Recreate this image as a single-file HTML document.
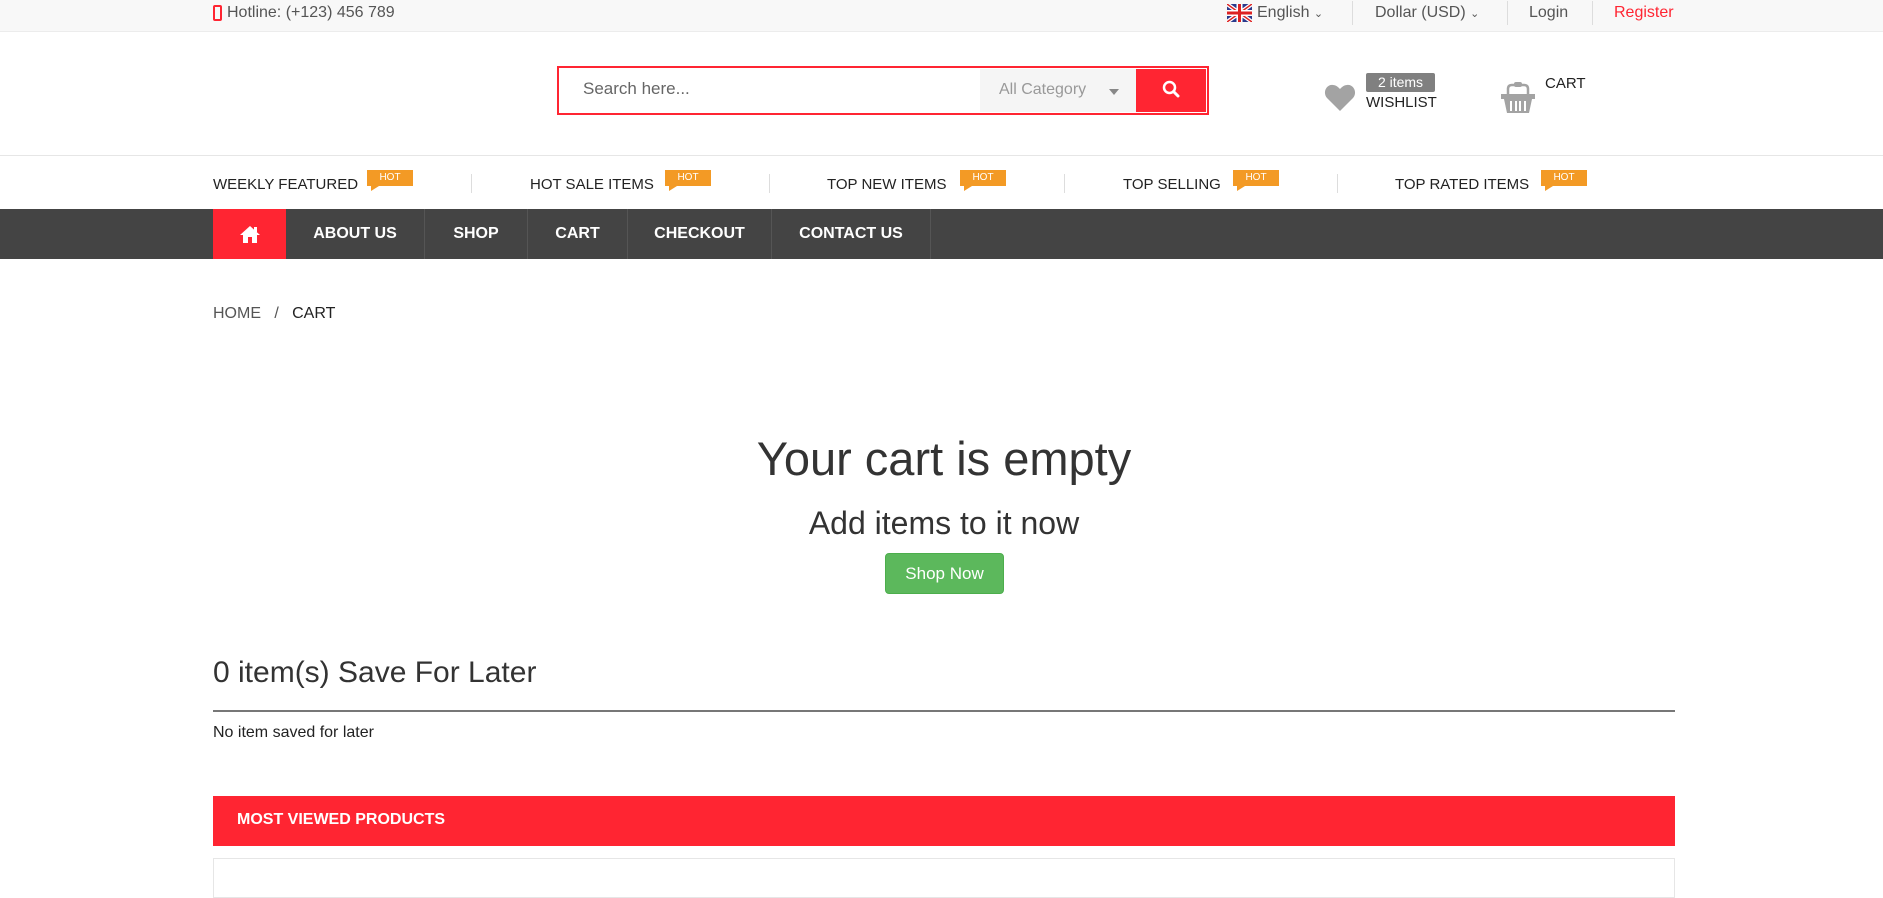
<!DOCTYPE html>
<html><head><meta charset="utf-8"><style>
*{margin:0;padding:0;box-sizing:border-box}
body{width:1883px;height:893px;overflow:hidden;background:#fff;font-family:"Liberation Sans",sans-serif;color:#333;position:relative}
.a{position:absolute;white-space:nowrap}
.top{position:absolute;left:0;top:0;width:1883px;height:32px;background:#f8f8f8;border-bottom:1px solid #ececec}
.t{font-size:16px;color:#555;top:4px}
.sep{position:absolute;width:1px;background:#ddd}
.tab{font-size:15px;color:#222;top:176px}
.hot{position:absolute;width:46px;height:16px;background:#f39a25;color:#fff;font-size:10px;text-align:center;line-height:16px;top:170px}
.hot:after{content:"";position:absolute;left:4px;top:16px;border-left:0 solid transparent;border-right:8px solid transparent;border-top:5px solid #f39a25}
.nav{position:absolute;left:0;top:209px;width:1883px;height:50px;background:#444}
.ni{position:absolute;top:0;height:50px;line-height:50px;color:#fff;font-weight:bold;font-size:16px;text-align:center;border-right:1px solid #555}
</style></head><body>
<div class="top"></div>
<svg class="a" style="left:213px;top:5px" width="9" height="16" viewBox="0 0 9 16"><rect x="1" y="1" width="7" height="14" rx="1" fill="none" stroke="#ff2532" stroke-width="2"/></svg>
<div class="a t" style="left:227px">Hotline: (+123) 456 789</div>
<svg class="a" style="left:1227px;top:4px" width="25" height="18" viewBox="0 0 25 18"><rect width="25" height="18" fill="#2b3a8c"/><path d="M0 0L25 18M25 0L0 18" stroke="#fff" stroke-width="4"/><path d="M0 0L25 18M25 0L0 18" stroke="#d22" stroke-width="1.5"/><path d="M12.5 0V18M0 9H25" stroke="#fff" stroke-width="6"/><path d="M12.5 0V18M0 9H25" stroke="#d22" stroke-width="3"/></svg>
<div class="a t" style="left:1257px">English <span style="font-size:11px">&#8964;</span></div>
<div class="sep" style="left:1352px;top:1px;height:24px"></div>
<div class="a t" style="left:1375px">Dollar (USD) <span style="font-size:11px">&#8964;</span></div>
<div class="sep" style="left:1507px;top:1px;height:24px"></div>
<div class="a t" style="left:1529px">Login</div>
<div class="sep" style="left:1592px;top:1px;height:24px"></div>
<div class="a t" style="left:1614px;color:#ff2532">Register</div>

<div class="a" style="left:557px;top:66px;width:652px;height:49px;border:2px solid #ff2532"></div>
<div class="a" style="left:583px;top:79px;font-size:17px;color:#666">Search here...</div>
<div class="a" style="left:980px;top:69px;width:156px;height:43px;background:#f5f5f5"></div>
<div class="a" style="left:999px;top:81px;font-size:16px;color:#999">All Category</div>
<div class="a" style="left:1109px;top:89px;border-left:5px solid transparent;border-right:5px solid transparent;border-top:6px solid #888"></div>
<div class="a" style="left:1136px;top:69px;width:70px;height:43px;background:#ff2532"></div>
<svg class="a" style="left:1162px;top:80px" width="18" height="18" viewBox="0 0 18 18"><circle cx="7.5" cy="7.5" r="5.5" fill="none" stroke="#fff" stroke-width="2.5"/><path d="M11.5 11.5L16 16" stroke="#fff" stroke-width="3" stroke-linecap="round"/></svg>

<svg class="a" style="left:1324px;top:84px" width="32" height="28" viewBox="0 0 32 28"><path d="M16 27L3 14C-2 8 3 0 9 1c3 0 5 2 7 4 2-2 4-4 7-4 6-1 11 7 6 13z" fill="#a3a3a3"/></svg>
<div class="a" style="left:1366px;top:73px;width:69px;height:19px;background:#808080;border-radius:2px;color:#fff;font-size:14px;text-align:center;line-height:19px">2 items</div>
<div class="a" style="left:1366px;top:94px;font-size:15px;color:#222">WISHLIST</div>
<svg class="a" style="left:1500px;top:80px" width="36" height="34" viewBox="0 0 36 34"><path d="M8 14V9Q8 5 12 5H24Q28 5 28 9V14" fill="none" stroke="#a3a3a3" stroke-width="2.5"/><rect x="14" y="2" width="8" height="5" rx="2" fill="#a3a3a3"/><rect x="1" y="14" width="34" height="5" fill="#a3a3a3"/><path d="M4 19H32L29 33H7Z" fill="#a3a3a3"/><path d="M11 21V31M16 21V31M20 21V31M25 21V31" stroke="#fff" stroke-width="2"/></svg>
<div class="a" style="left:1545px;top:75px;font-size:15px;color:#222">CART</div>

<div class="a" style="left:0;top:155px;width:1883px;height:1px;background:#e6e6e6"></div>
<div class="a tab" style="left:213px">WEEKLY FEATURED</div><div class="hot" style="left:367px">HOT</div>
<div class="sep" style="left:471px;top:174px;height:19px;background:#ddd"></div>
<div class="a tab" style="left:530px">HOT SALE ITEMS</div><div class="hot" style="left:665px">HOT</div>
<div class="sep" style="left:769px;top:174px;height:19px"></div>
<div class="a tab" style="left:827px">TOP NEW ITEMS</div><div class="hot" style="left:960px">HOT</div>
<div class="sep" style="left:1064px;top:174px;height:19px"></div>
<div class="a tab" style="left:1123px">TOP SELLING</div><div class="hot" style="left:1233px">HOT</div>
<div class="sep" style="left:1337px;top:174px;height:19px"></div>
<div class="a tab" style="left:1395px">TOP RATED ITEMS</div><div class="hot" style="left:1541px">HOT</div>

<div class="nav">
<div class="ni" style="left:213px;width:73px;background:#ff2532;border:0"><svg style="margin-top:16px" width="22" height="18" viewBox="0 0 22 18"><path d="M11 1L1 10H4V18H9V12H13V18H18V10H21Z" fill="#fff"/><rect x="15" y="2" width="3" height="5" fill="#fff"/></svg></div>
<div class="ni" style="left:286px;width:139px">ABOUT US</div>
<div class="ni" style="left:425px;width:103px">SHOP</div>
<div class="ni" style="left:528px;width:100px">CART</div>
<div class="ni" style="left:628px;width:144px">CHECKOUT</div>
<div class="ni" style="left:772px;width:159px">CONTACT US</div>
</div>

<div class="a" style="left:213px;top:305px;font-size:16px;color:#555">HOME &nbsp; / &nbsp; <span style="color:#222">CART</span></div>
<div class="a" style="left:0;width:1888px;text-align:center;top:431px;font-size:47px;color:#333">Your cart is empty</div>
<div class="a" style="left:0;width:1888px;text-align:center;top:505px;font-size:32px;color:#333">Add items to it now</div>
<div class="a" style="left:885px;top:553px;width:119px;height:41px;background:#5cb85c;border:1px solid #4cae4c;border-radius:4px;color:#fff;font-size:17px;text-align:center;line-height:39px">Shop Now</div>
<div class="a" style="left:213px;top:656px;font-size:30px;color:#333">0 item(s) Save For Later</div>
<div class="a" style="left:213px;top:710px;width:1462px;height:2px;background:#777"></div>
<div class="a" style="left:213px;top:724px;font-size:16px;color:#222">No item saved for later</div>
<div class="a" style="left:213px;top:796px;width:1462px;height:50px;background:#ff2532"></div>
<div class="a" style="left:237px;top:811px;font-size:16px;font-weight:bold;color:#fff">MOST VIEWED PRODUCTS</div>
<div class="a" style="left:213px;top:858px;width:1462px;height:40px;border:1px solid #e6e6e6"></div>
</body></html>
